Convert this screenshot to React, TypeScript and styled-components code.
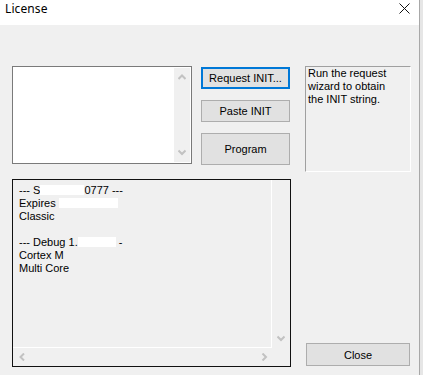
import styled, { createGlobalStyle } from 'styled-components';

const GlobalStyle = createGlobalStyle`
  html, body {
    margin: 0;
    padding: 0;
    background: #f0f0f0;
  }
  body {
    font-family: "Liberation Sans", Arial, sans-serif;
    font-size: 11px;
    color: #000;
  }
`;

const Screen = styled.div`
  display: flex;
  width: 423px;
  height: 375px;
  overflow: hidden;
  background: #e6e6e6;
`;

const Window = styled.div`
  width: 420px;
  height: 375px;
  display: flex;
  flex-direction: column;
  background: #f0f0f0;
  border-right: 1px solid #a8a8a8;
  box-sizing: border-box;
`;

const TitleBar = styled.div`
  height: 25px;
  flex: none;
  display: flex;
  align-items: flex-start;
  justify-content: space-between;
  padding: 0 9px 0 5px;
  box-sizing: border-box;
  background: #fff;
`;

const Title = styled.span`
  font-family: "Noto Sans", "Liberation Sans", sans-serif;
  font-size: 12px;
  line-height: 16px;
  margin-top: 1px;
  letter-spacing: 0.1px;
`;

const CloseGlyph = styled.svg`
  margin-top: 3px;
`;

const Body = styled.div`
  flex: 1;
  display: flex;
  flex-direction: column;
  gap: 7px;
  padding: 41px 0 8px 12px;
`;

const TopRow = styled.div`
  display: flex;
  align-items: flex-start;
  height: 106px;
`;

const ListBox = styled.div`
  width: 180px;
  height: 98px;
  box-sizing: border-box;
  border: 1px solid #7a7a7a;
  background: #fff;
  padding: 1px;
  display: flex;
  justify-content: flex-end;
`;

const VScroll = styled.div<{ $width?: number; $endOnly?: boolean }>`
  width: ${p => p.$width ?? 16}px;
  background: #f0f0f0;
  display: flex;
  flex-direction: column;
  justify-content: ${p => (p.$endOnly ? 'flex-end' : 'space-between')};
  align-items: center;
  padding: 6px 0;
  box-sizing: border-box;
`;

const HScroll = styled.div`
  grid-column: 1;
  display: flex;
  justify-content: space-between;
  align-items: center;
  padding: 0 4px 0 6px;
`;

const ButtonColumn = styled.div`
  margin: 1px 0 0 9px;
  width: 89px;
  display: flex;
  flex-direction: column;
  gap: 11px;
`;

const Button = styled.button<{ $h: number; $focused?: boolean }>`
  height: ${p => p.$h}px;
  width: 100%;
  box-sizing: border-box;
  margin: 0;
  padding: 0;
  background: #e1e1e1;
  border: ${p => (p.$focused ? '2px solid #0078d7' : '1px solid #adadad')};
  font-family: "Liberation Sans", Arial, sans-serif;
  font-size: 11px;
  color: #000;
`;

const InfoBox = styled.div`
  margin-left: 15px;
  width: 106px;
  height: 106px;
  box-sizing: border-box;
  border-top: 1px solid #a0a0a0;
  border-left: 1px solid #a0a0a0;
  border-right: 1px solid #fff;
  border-bottom: 1px solid #fff;
  padding: 0 2px;
  line-height: 13px;
`;

const BottomRow = styled.div`
  display: flex;
  align-items: flex-end;
`;

const LogBox = styled.div`
  width: 279px;
  height: 188px;
  box-sizing: border-box;
  border: 1px solid #111;
  display: grid;
  grid-template-columns: 1fr 18px;
  grid-template-rows: 1fr 18px;
`;

const LogText = styled.div`
  border-right: 1px solid #fff;
  border-bottom: 1px solid #fff;
  padding: 4px 0 0 6px;
  line-height: 13px;
  white-space: pre;
  overflow: hidden;
`;

const Line = styled.div`
  height: 13px;
`;

const Redact = styled.span<{ $w: number }>`
  display: inline-block;
  width: ${p => p.$w}px;
  height: 10px;
  background: #fff;
  vertical-align: -1px;
`;

const CloseButtonWrap = styled.div`
  margin: 0 0 1px 15px;
  width: 104px;
`;

const Chevron = ({ dir }: { dir: 'up' | 'down' | 'left' | 'right' }) => {
  const pts = {
    up: '0.5,5 4,1.5 7.5,5',
    down: '0.5,1.5 4,5 7.5,1.5',
    left: '5,0.5 1.5,4 5,7.5',
    right: '1.5,0.5 5,4 1.5,7.5',
  }[dir];
  const horiz = dir === 'left' || dir === 'right';
  return (
    <svg width={horiz ? 7 : 8} height={horiz ? 8 : 7} viewBox={horiz ? '0 0 7 8' : '0 0 8 7'}>
      <polyline points={pts} fill="none" stroke="#c2c2c2" strokeWidth="2" />
    </svg>
  );
};

const CloseIcon = () => (
  <CloseGlyph width="11" height="11" viewBox="0 0 11 11">
    <path d="M0.5 0.5 L10.5 10.5 M10.5 0.5 L0.5 10.5" stroke="#111" strokeWidth="1" />
  </CloseGlyph>
);

export default function App() {
  return (
    <Screen>
      <GlobalStyle />
      <Window>
        <TitleBar>
          <Title>License</Title>
          <CloseIcon />
        </TitleBar>
        <Body>
          <TopRow>
            <ListBox>
              <VScroll>
                <Chevron dir="up" />
                <Chevron dir="down" />
              </VScroll>
            </ListBox>
            <ButtonColumn>
              <Button $h={22} $focused>Request INIT...</Button>
              <Button $h={22}>Paste INIT</Button>
              <Button $h={32}>Program</Button>
            </ButtonColumn>
            <InfoBox>
              Run the request
              <br />
              wizard to obtain
              <br />
              the INIT string.
            </InfoBox>
          </TopRow>
          <BottomRow>
            <LogBox>
              <LogText>
                <Line>--- S<Redact $w={44} />0777 ---</Line>
                <Line>Expires <Redact $w={59} /></Line>
                <Line>Classic</Line>
                <Line />
                <Line>--- Debug 1.<Redact $w={38} /> -</Line>
                <Line>Cortex M</Line>
                <Line>Multi Core</Line>
              </LogText>
              <VScroll $width={18} $endOnly>
                <Chevron dir="down" />
              </VScroll>
              <HScroll>
                <Chevron dir="left" />
                <Chevron dir="right" />
              </HScroll>
            </LogBox>
            <CloseButtonWrap>
              <Button $h={23}>Close</Button>
            </CloseButtonWrap>
          </BottomRow>
        </Body>
      </Window>
    </Screen>
  );
}
